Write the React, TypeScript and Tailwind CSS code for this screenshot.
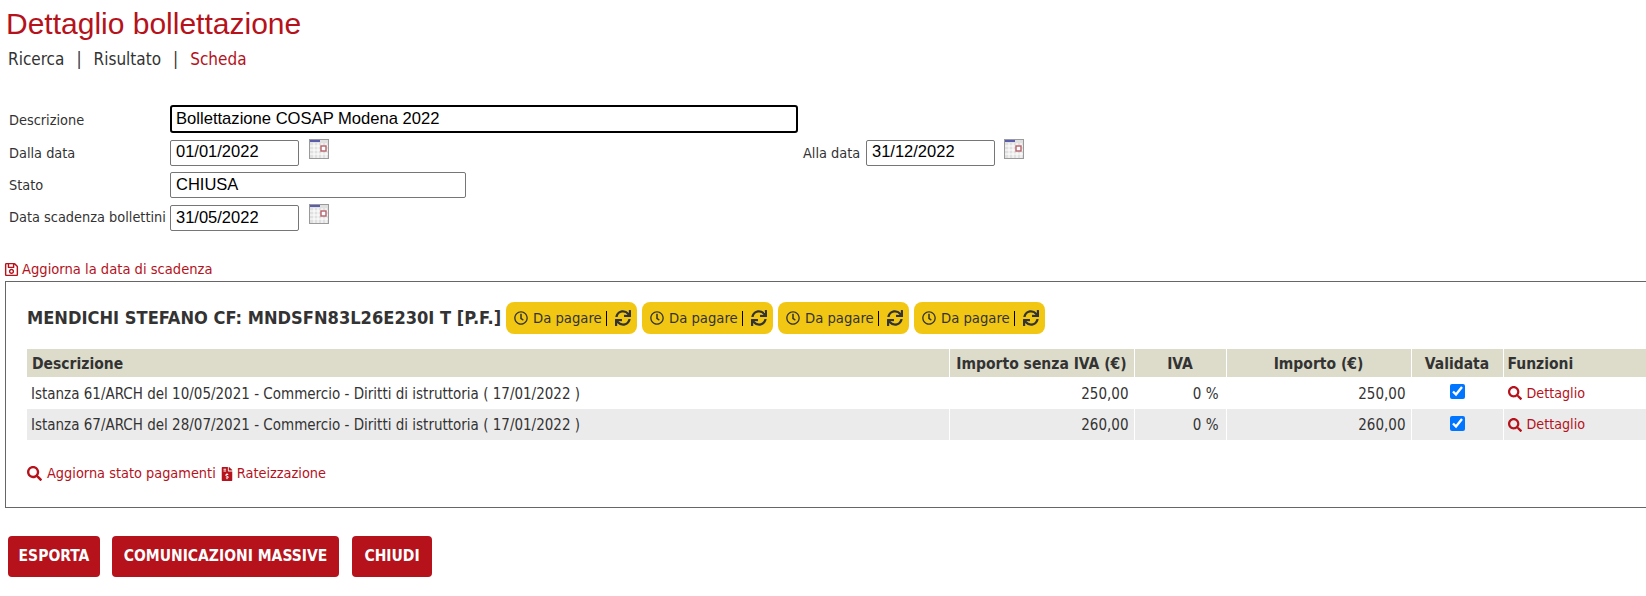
import { FaRegClock, FaSync, FaSearch, FaRegSave, FaFileInvoiceDollar } from "react-icons/fa"

const tahoma = "font-['DejaVu_Sans_Condensed','Noto_Sans',sans-serif]"

function CalendarIcon() {
  return (
    <svg width="20" height="20" viewBox="0 0 20 20" className="block">
      <rect x="0" y="0" width="20" height="20" fill="#e0e0e0" />
      <path d="M1 7h18M1 11h18M1 15h18M5 4v15M9 4v15M13 4v15M17 4v15" stroke="#fff" strokeWidth="1" />
      <rect x="1" y="1" width="10" height="2" fill="#5a5cae" />
      <rect x="12" y="7" width="5" height="5" fill="#fff" stroke="#b5616a" strokeWidth="1.4" />
      <rect x="0.5" y="0.5" width="19" height="19" fill="none" stroke="#9a9a9a" />
    </svg>
  )
}

function Badge() {
  return (
    <span className="flex h-[32px] w-[131px] items-center rounded-[8px] bg-[#f2c714] pl-[8px] text-[14.7px] text-[#333]">
      <FaRegClock className="mr-[5px] size-[14px]" />
      <span>Da pagare</span>
      <span className="ml-[4px] h-[15px] border-l border-black" />
      <FaSync className="ml-[8px] size-[16px]" />
    </span>
  )
}

const rows = [
  { descr: "Istanza 61/ARCH del 10/05/2021 - Commercio - Diritti di istruttoria ( 17/01/2022 )", imp: "250,00", alt: false },
  { descr: "Istanza 67/ARCH del 28/07/2021 - Commercio - Diritti di istruttoria ( 17/01/2022 )", imp: "260,00", alt: true },
]

export default function App() {
  return (
    <div className={`h-[596px] w-[1646px] overflow-hidden bg-white text-[#333] ${tahoma}`}>
      <h1 className="pl-[6px] pt-[7px] font-['Liberation_Sans',sans-serif] text-[30px] leading-[34px] text-[#b5121b]">
        Dettaglio bollettazione
      </h1>

      {/* nav */}
      <div className="mt-[8px] flex pl-[8px] text-[17px] leading-[20px]">
        <span>Ricerca</span>
        <span className="mx-[12px]">|</span>
        <span>Risultato</span>
        <span className="mx-[12px]">|</span>
        <span className="text-[#b5121b]">Scheda</span>
      </div>

      {/* form */}
      <div className="mt-[36px] pl-[9px] text-[14.4px]">
        <div className="flex items-center">
          <label className="mt-[3px] w-[161px]">Descrizione</label>
          <input
            readOnly
            value="Bollettazione COSAP Modena 2022"
            className="h-[28px] w-[628px] rounded-[3px] border-2 border-black px-[4px] pb-[1px] font-['Liberation_Sans',sans-serif] text-[16.6px] text-black outline-none"
          />
        </div>
        <div className="mt-[6px] flex items-center">
          <label className="mt-[2px] w-[161px]">Dalla data</label>
          <input
            readOnly
            value="01/01/2022"
            className="h-[26px] w-[129px] rounded-[2px] border border-[#767676] px-[5px] pb-[2px] font-['Liberation_Sans',sans-serif] text-[16.5px] text-black"
          />
          <span className="mb-[7px] ml-[10px]"><CalendarIcon /></span>
          <label className="ml-[474px] mt-[2px] w-[63px] whitespace-nowrap">Alla data</label>
          <input
            readOnly
            value="31/12/2022"
            className="h-[26px] w-[129px] rounded-[2px] border border-[#767676] px-[5px] pb-[2px] font-['Liberation_Sans',sans-serif] text-[16.5px] text-black"
          />
          <span className="mb-[7px] ml-[9px]"><CalendarIcon /></span>
        </div>
        <div className="mt-[6px] flex items-center">
          <label className="mt-[1px] w-[161px]">Stato</label>
          <input
            readOnly
            value="CHIUSA"
            className="h-[26px] w-[296px] rounded-[2px] border border-[#767676] px-[5px] pb-[2px] font-['Liberation_Sans',sans-serif] text-[16.5px] text-black"
          />
        </div>
        <div className="mt-[6px] flex items-center">
          <label className="mt-[1px] w-[161px] whitespace-nowrap">Data scadenza bollettini</label>
          <input
            readOnly
            value="31/05/2022"
            className="h-[26px] w-[129px] rounded-[2px] border border-[#767676] px-[5px] pb-[1px] font-['Liberation_Sans',sans-serif] text-[16.5px] text-black"
          />
          <span className="mb-[7px] ml-[10px]"><CalendarIcon /></span>
        </div>
      </div>

      <a className="mt-[29px] flex h-[18px] items-center pl-[4px] text-[14.6px] text-[#b5121b]">
        <FaRegSave className="mr-[3px] size-[15px]" />
        Aggiorna la data di scadenza
      </a>

      {/* card, runs past the right edge */}
      <div className="ml-[5px] mt-[3px] h-[227px] w-[1700px] border border-[#666] pl-[21px] pt-[20px]">
        <div className="flex items-center">
          <span className="w-[479px] whitespace-nowrap text-[18.1px] font-bold text-[#333]">
            MENDICHI STEFANO CF: MNDSFN83L26E230I T [P.F.]
          </span>
          <span className="flex gap-[5px]">
            <Badge />
            <Badge />
            <Badge />
            <Badge />
          </span>
        </div>

        <table className="mt-[15px] w-[1640px] table-fixed border-collapse text-[15px]">
          <colgroup>
            <col className="w-[922px]" />
            <col className="w-[185px]" />
            <col className="w-[92px]" />
            <col className="w-[185px]" />
            <col className="w-[92px]" />
            <col />
          </colgroup>
          <thead>
            <tr className="h-[28px] bg-[#dddccb] text-[15.5px] font-bold">
              <th className="border-r border-white pl-[5px] pt-[3px] text-left">Descrizione</th>
              <th className="border-r border-white pt-[3px] text-center">Importo senza IVA (€)</th>
              <th className="border-r border-white pt-[3px] text-center">IVA</th>
              <th className="border-r border-white pt-[3px] text-center">Importo (€)</th>
              <th className="border-r border-white pt-[3px] text-center">Validata</th>
              <th className="pl-[4px] pt-[3px] text-left">Funzioni</th>
            </tr>
          </thead>
          <tbody>
            {rows.map((r) => (
              <tr key={r.descr} className={r.alt ? "h-[31px] bg-[#ebebeb]" : "h-[32px] bg-white"}>
                <td className="border-r border-white pl-[4px] pt-[2px]">{r.descr}</td>
                <td className="border-r border-white pr-[5px] pt-[2px] text-right">{r.imp}</td>
                <td className="border-r border-white pr-[7px] pt-[2px] text-right">0 %</td>
                <td className="border-r border-white pr-[5px] pt-[2px] text-right">{r.imp}</td>
                <td className="border-r border-white text-center">
                  <input readOnly type="checkbox" checked className="mb-[3px] size-[15px] align-middle accent-[#0075ff]" />
                </td>
                <td className="pl-[4px] pt-[1px] text-[14.2px] text-[#b5121b]">
                  <span className="flex items-center">
                    <FaSearch className="mr-[5px] size-[14px]" />
                    Dettaglio
                  </span>
                </td>
              </tr>
            ))}
          </tbody>
        </table>

        <div className="mt-[23px] flex items-center text-[14.4px] text-[#b5121b]">
          <FaSearch className="mr-[5px] size-[15px]" />
          <span>Aggiorna stato pagamenti</span>
          <FaFileInvoiceDollar className="ml-[4px] mr-[3px] size-[14px]" />
          <span>Rateizzazione</span>
        </div>
      </div>

      {/* actions */}
      <div className="ml-[8px] mt-[28px] flex">
        <button className="h-[41px] w-[92px] rounded-[4px] bg-[#b5121b] pt-[1px] text-[15.5px] font-bold text-white">ESPORTA</button>
        <button className="ml-[12px] h-[41px] w-[227px] rounded-[4px] bg-[#b5121b] pt-[1px] text-[15.5px] font-bold text-white">COMUNICAZIONI MASSIVE</button>
        <button className="ml-[13px] h-[41px] w-[80px] rounded-[4px] bg-[#b5121b] pt-[1px] text-[15.5px] font-bold text-white">CHIUDI</button>
      </div>
    </div>
  )
}
